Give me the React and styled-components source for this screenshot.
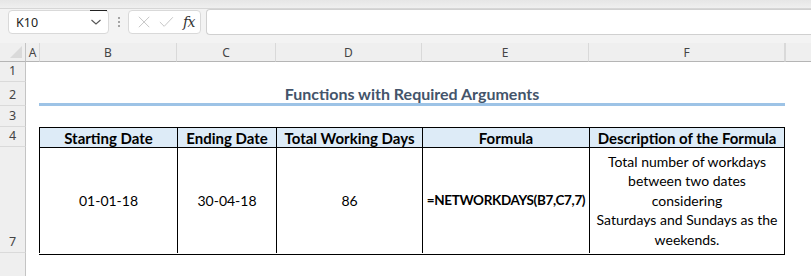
import React from "react";
import styled, { createGlobalStyle } from "styled-components";

const GlobalStyle = createGlobalStyle`
  html, body {
    margin: 0;
    padding: 0;
    background: #ffffff;
    overflow: hidden;
  }
`;

const COLS = ["A", "B", "C", "D", "E", "F"];
const COL_WIDTHS = [13, 138, 99, 146, 167, 196];

const ROWS = [
  { label: "1", height: 20 },
  { label: "2", height: 24 },
  { label: "3", height: 21 },
  { label: "4", height: 20 },
  { label: "7", height: 106 },
  { label: "", height: 40 },
];

const App = () => {
  return (
    <Page>
      <GlobalStyle />
      <TopBand />
      <FormulaBar>
        <NameBox>
          <NameText>K10</NameText>
          <DropMark />
          <Chevron viewBox="0 0 12 8">
            <path d="M1.5 2 L6 6 L10.5 2" fill="none" stroke="#555" strokeWidth="1.1" />
          </Chevron>
        </NameBox>
        <Dots>
          <span />
          <span />
          <span />
        </Dots>
        <FxBox>
          <svg width="14" height="14" viewBox="0 0 14 14">
            <path d="M1 1 L13 13 M13 1 L1 13" stroke="#c3c3c3" strokeWidth="1.1" fill="none" />
          </svg>
          <svg width="17" height="14" viewBox="0 0 17 14">
            <path d="M1 7 L6 12 L16 1.5" stroke="#c3c3c3" strokeWidth="1.1" fill="none" />
          </svg>
          <FxLabel>
            f<i>x</i>
          </FxLabel>
        </FxBox>
        <FormulaInput />
      </FormulaBar>

      <Sheet>
        <Corner>
          <CornerTriangle />
        </Corner>
        {COLS.map((c) => (
          <ColHead key={c}>{c}</ColHead>
        ))}
        <ColHead $last />

        {ROWS.map((r, i) => (
          <RowHead key={i} style={{ gridRow: i + 2 }} $blank={!r.label}>
            {r.label}
          </RowHead>
        ))}

        <Title>Functions with Required Arguments</Title>

        <Table>
          <HeadCell>Starting Date</HeadCell>
          <HeadCell>Ending Date</HeadCell>
          <HeadCell>Total Working Days</HeadCell>
          <HeadCell>Formula</HeadCell>
          <HeadCell>Description of the Formula</HeadCell>

          <Cell>01-01-18</Cell>
          <Cell>30-04-18</Cell>
          <Cell>86</Cell>
          <Cell $formula>=NETWORKDAYS(B7,C7,7)</Cell>
          <Cell>
            Total number of workdays
            <br />
            between two dates
            <br />
            considering
            <br />
            Saturdays and Sundays as the
            <br />
            weekends.
          </Cell>
        </Table>
      </Sheet>
    </Page>
  );
};

const Page = styled.div`
  width: 811px;
  height: 276px;
  overflow: hidden;
  background: #ffffff;
  font-family: "Noto Sans", "Open Sans", sans-serif;
`;

//상단 리본 아래 회색 띠
const TopBand = styled.div`
  height: 8px;
  background: linear-gradient(#e6e6e6, #efefef);
  border-bottom: 1px solid #d6d6d6;
`;

const FormulaBar = styled.div`
  display: flex;
  align-items: center;
  height: 34px;
  box-sizing: border-box;
  padding: 1px 0 9px 8px;
  background: #f3f3f3;
`;

const NameBox = styled.div`
  position: relative;
  display: flex;
  align-items: center;
  justify-content: space-between;
  width: 101px;
  height: 24px;
  box-sizing: border-box;
  padding: 0 6px 0 7px;
  background: #ffffff;
  border: 1px solid #d9d9d9;
  border-radius: 4px;
`;

const NameText = styled.span`
  font-family: "Noto Sans", sans-serif;
  font-size: 12.5px;
  color: #222;
`;

const DropMark = styled.div`
  position: absolute;
  top: -1px;
  right: 1px;
  width: 17px;
  height: 1px;
  background: #222;
`;

const Chevron = styled.svg`
  width: 12px;
  height: 8px;
`;

const Dots = styled.div`
  display: flex;
  flex-direction: column;
  gap: 2px;
  margin: 0 8px 0 9px;
  span {
    width: 2px;
    height: 2px;
    background: #8a8a8a;
    border-radius: 1px;
  }
`;

const FxBox = styled.div`
  display: flex;
  align-items: center;
  gap: 9px;
  width: 73px;
  height: 24px;
  box-sizing: border-box;
  padding: 0 5px 0 9px;
  background: #ffffff;
  border: 1px solid #d9d9d9;
  border-radius: 4px;
`;

const FxLabel = styled.span`
  font-family: "DejaVu Serif", "Liberation Serif", serif;
  font-style: italic;
  font-size: 14px;
  color: #333;
  letter-spacing: -0.5px;
  i {
    font-style: italic;
  }
`;

const FormulaInput = styled.div`
  flex: 1;
  height: 24px;
  margin-left: 5px;
  background: #ffffff;
  border: 1px solid #d0d0d0;
  border-right: none;
  border-radius: 4px 0 0 4px;
`;

const Sheet = styled.div`
  display: grid;
  grid-template-columns: 26px ${COL_WIDTHS.map((w) => w + "px").join(" ")} 1fr;
  grid-template-rows: 19px ${ROWS.map((r) => r.height + "px").join(" ")};
  background: #ffffff;
`;

const Corner = styled.div`
  position: relative;
  background: #efefef;
  border-right: 1px solid #c4c4c4;
  border-bottom: 1px solid #b5b5b5;
`;

const CornerTriangle = styled.div`
  position: absolute;
  right: 3px;
  bottom: 3px;
  width: 0;
  height: 0;
  border-left: 12px solid transparent;
  border-bottom: 12px solid #dadada;
`;

const ColHead = styled.div`
  display: flex;
  align-items: center;
  justify-content: center;
  background: #efefef;
  border-bottom: 1px solid #b5b5b5;
  border-left: ${({ $last }) => ($last ? "1px solid #d9d9d9" : "none")};
  border-right: ${({ $last }) => ($last ? "none" : "1px solid #d9d9d9")};
  box-sizing: border-box;
  font-family: "Noto Sans", sans-serif;
  font-size: 12px;
  color: #444;
  &:nth-child(2) {
    border-right: none;
  }
  &:nth-child(2) + div {
    border-left: 1px solid #d9d9d9;
  }
`;

const RowHead = styled.div`
  grid-column: 1;
  display: flex;
  align-items: flex-end;
  justify-content: center;
  padding-bottom: 1px;
  box-sizing: border-box;
  background: #efefef;
  border-right: 1px solid #c4c4c4;
  border-bottom: ${({ $blank }) => ($blank ? "none" : "1px solid #dadada")};
  font-family: "Noto Sans", sans-serif;
  font-size: 12.5px;
  line-height: 18px;
  color: #444;
`;

const Title = styled.div`
  grid-column: 3 / 8;
  grid-row: 3;
  display: flex;
  align-items: center;
  justify-content: center;
  padding-top: 1px;
  border-bottom: 3px solid #9dc3e6;
  font-family: Lato, "Open Sans", sans-serif;
  font-weight: 700;
  font-size: 16px;
  color: #44546a;
`;

const Table = styled.div`
  grid-column: 3 / 8;
  grid-row: 5 / 7;
  display: grid;
  grid-template-columns: 138px 99px 146px 167px 195px;
  grid-template-rows: 20px 106px;
  align-self: start;
  height: 127px;
  border-right: 1px solid #000;
  border-bottom: 1px solid #000;
  font-family: Lato, "Open Sans", sans-serif;
  color: #000;
`;

const HeadCell = styled.div`
  display: flex;
  align-items: center;
  justify-content: center;
  border-left: 1px solid #000;
  border-top: 1px solid #000;
  background: #ddebf7;
  font-weight: 700;
  font-size: 15px;
  white-space: nowrap;
`;

const Cell = styled.div`
  display: flex;
  align-items: center;
  justify-content: center;
  border-left: 1px solid #000;
  border-top: 1px solid #000;
  text-align: center;
  font-size: ${({ $formula }) => ($formula ? "13.5px" : "14px")};
  font-weight: ${({ $formula }) => ($formula ? 700 : 400)};
  letter-spacing: ${({ $formula }) => ($formula ? "-0.35px" : "normal")};
  line-height: 19.5px;
  white-space: nowrap;
`;

export default App;
